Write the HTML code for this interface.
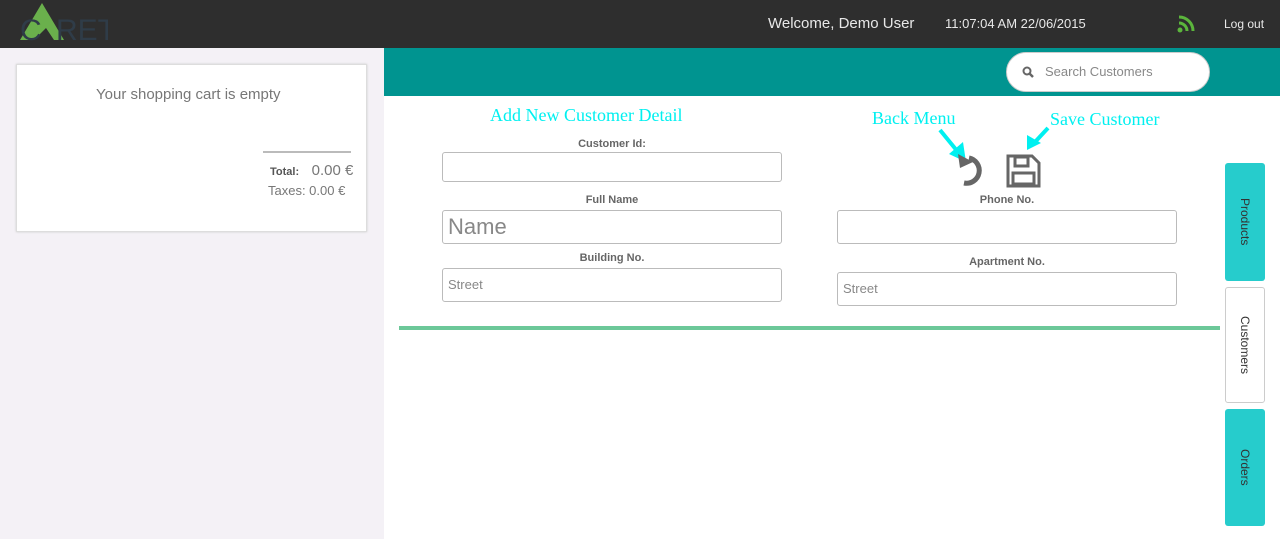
<!DOCTYPE html>
<html><head><style>
*{margin:0;padding:0;box-sizing:border-box}
body{width:1280px;height:539px;overflow:hidden;font-family:"Liberation Sans",sans-serif;background:#f4f1f6;position:relative}
.top{position:absolute;left:0;top:0;width:1280px;height:48px;background:#2e2e2e}
.abs{position:absolute}
.teal{position:absolute;left:384px;top:48px;width:896px;height:48px;background:#009490}
.main{position:absolute;left:384px;top:96px;width:896px;height:443px;background:#fff}
.cart{position:absolute;left:16px;top:64px;width:351px;height:168px;background:#fff;border:1px solid #ddd;box-shadow:0 0 2px #ccc}
.lbl{position:absolute;font-size:11px;font-weight:bold;color:#666;text-align:center}
.inp{position:absolute;border:1px solid #bbb;border-radius:3px;background:#fff;color:#888;padding-left:5px}
.ann{position:absolute;font-family:"Liberation Serif",serif;color:#00f0f0;font-size:18px}
.tab{position:absolute;left:1225px;width:40px;border-radius:3px;writing-mode:vertical-rl;text-align:center;font-size:12px;color:#333;display:flex;align-items:center;justify-content:center}
</style></head><body>
<div class="top"></div>
<svg class="abs" style="left:18px;top:2px" width="90" height="42"><polygon points="24,1 46,38 36,38 28,26 16,38 2,38" fill="#6ab04c"/><text x="2" y="38" font-size="30" fill="#2f3c48" font-family="Liberation Sans">C</text><text x="38" y="38" font-size="30" fill="#2f3c48" font-family="Liberation Sans">RET</text></svg>
<div class="abs" style="left:768px;top:15px;color:#e8e8e8;font-size:15px">Welcome, Demo User</div>
<div class="abs" style="left:945px;top:16px;color:#e8e8e8;font-size:13px">11:07:04 AM 22/06/2015</div>
<svg class="abs" style="left:1177px;top:15px" width="18" height="18"><circle cx="3" cy="15" r="2.5" fill="#5bb53c"/><path d="M2 8a8 8 0 0 1 8 8M2 2a14 14 0 0 1 14 14" stroke="#5bb53c" stroke-width="3" fill="none"/></svg>
<div class="abs" style="left:1224px;top:17px;color:#e8e8e8;font-size:12px">Log out</div>
<div class="teal"></div>
<div class="abs" style="left:1006px;top:52px;width:204px;height:40px;background:#fff;border-radius:20px;border:1px solid #ccc"></div>
<svg class="abs" style="left:1022px;top:66px" width="12" height="12"><circle cx="5" cy="5" r="3.5" stroke="#666" stroke-width="2" fill="none"/><path d="M7.5 7.5L11 11" stroke="#666" stroke-width="2.5"/></svg>
<div class="abs" style="left:1045px;top:64px;font-size:13px;color:#888">Search Customers</div>
<div class="main"></div>
<div class="cart"></div>
<div class="abs" style="left:96px;top:86px;font-size:15px;color:#777">Your shopping cart is empty</div>
<div class="abs" style="left:263px;top:151px;width:88px;border-top:2px solid #bbb"></div>
<div class="abs" style="left:270px;top:162px;font-size:15px;color:#777"><b style="font-size:11px;color:#555">Total:</b>&nbsp;&nbsp; 0.00 €</div>
<div class="abs" style="left:268px;top:183px;font-size:13px;color:#777">Taxes: 0.00 €</div>
<div class="ann" style="left:490px;top:105px">Add New Customer Detail</div>
<div class="ann" style="left:872px;top:108px">Back Menu</div>
<div class="ann" style="left:1050px;top:109px">Save Customer</div>
<svg class="abs" style="left:935px;top:110px" width="120" height="80">
<path d="M5 20L23 42" stroke="#00f0f0" stroke-width="4"/><polygon points="31,52 14,44 28,32" fill="#00f0f0"/>
<path d="M113 18L100 32" stroke="#00f0f0" stroke-width="4"/><polygon points="92,40 92,25 106,33" fill="#00f0f0"/>
<path d="M34 48a12 12 0 1 1 -5 25" stroke="#666" stroke-width="5" fill="none"/><polygon points="23,44 38,52 25,58" fill="#666"/>
<path d="M73 46h24l7 7v23h-31z" stroke="#666" stroke-width="3" fill="none"/><rect x="80" y="47" width="13" height="9" fill="none" stroke="#666" stroke-width="3"/><rect x="78" y="63" width="21" height="11" fill="none" stroke="#666" stroke-width="3"/>
</svg>
<div class="lbl" style="left:442px;top:138px;width:340px">Customer Id:</div>
<div class="inp" style="left:442px;top:152px;width:340px;height:30px"></div>
<div class="lbl" style="left:442px;top:194px;width:340px">Full Name</div>
<div class="inp" style="left:442px;top:210px;width:340px;height:34px;font-size:22px;line-height:32px">Name</div>
<div class="lbl" style="left:442px;top:252px;width:340px">Building No.</div>
<div class="inp" style="left:442px;top:268px;width:340px;height:34px;font-size:13px;line-height:32px">Street</div>
<div class="lbl" style="left:837px;top:194px;width:340px">Phone No.</div>
<div class="inp" style="left:837px;top:210px;width:340px;height:34px"></div>
<div class="lbl" style="left:837px;top:256px;width:340px">Apartment No.</div>
<div class="inp" style="left:837px;top:272px;width:340px;height:34px;font-size:13px;line-height:32px">Street</div>
<div class="abs" style="left:399px;top:326px;width:821px;height:4px;background:#6cc899"></div>
<div class="tab" style="top:163px;height:118px;background:#26cccc">Products</div>
<div class="tab" style="top:287px;height:116px;background:#fff;border:1px solid #ccc">Customers</div>
<div class="tab" style="top:409px;height:117px;background:#26cccc">Orders</div>
</body></html>
